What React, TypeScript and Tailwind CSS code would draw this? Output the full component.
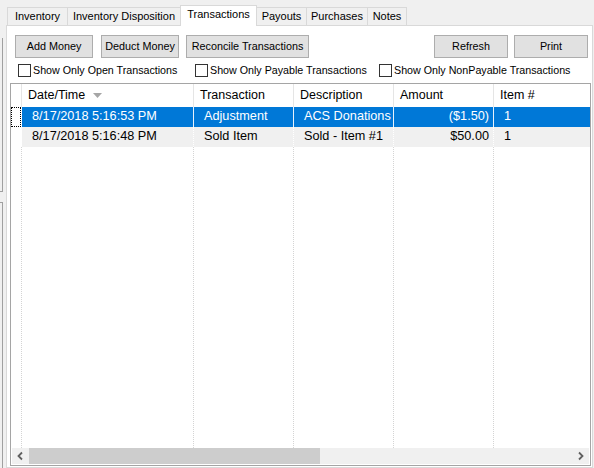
import React from "react";

type Tab = { label: string; width: string; active?: boolean };

const tabs: Tab[] = [
  { label: "Inventory", width: "w-[61px]" },
  { label: "Inventory Disposition", width: "w-[114px]" },
  { label: "Transactions", width: "w-[77px]", active: true },
  { label: "Payouts", width: "w-[51px]" },
  { label: "Purchases", width: "w-[62px]" },
  { label: "Notes", width: "w-[40px]" },
];

type Column = { key: string; label: string; width: string; right?: boolean; sorted?: boolean };

const columns: Column[] = [
  { key: "date", label: "Date/Time", width: "w-[172px] border-r", sorted: true },
  { key: "type", label: "Transaction", width: "w-[100px] border-r" },
  { key: "desc", label: "Description", width: "w-[100px] border-r" },
  { key: "amount", label: "Amount", width: "w-[100px] border-r", right: true },
  { key: "item", label: "Item #", width: "flex-1" },
];

type Row = Record<string, string>;

const rows: Row[] = [
  { date: "8/17/2018 5:16:53 PM", type: "Adjustment", desc: "ACS Donations", amount: "($1.50)", item: "1" },
  { date: "8/17/2018 5:16:48 PM", type: "Sold Item", desc: "Sold - Item #1", amount: "$50.00", item: "1" },
];

const btn =
  "h-[23px] border border-[#adadad] bg-[#e1e1e1] text-[10.8px] text-black flex items-center justify-center";

function CheckOption({ label, width }: { label: string; width: string }) {
  return (
    <div className={`flex items-center ${width}`}>
      <div className="w-[13px] h-[13px] border border-[#333333] bg-white shrink-0" />
      <span className="ml-[2px] text-[10.7px] leading-none text-black whitespace-nowrap">{label}</span>
    </div>
  );
}

function Chevron({ dir }: { dir: "left" | "right" }) {
  return (
    <svg width="17" height="16" viewBox="0 0 17 16">
      <polyline
        points={dir === "left" ? "10,4.5 6.5,8 10,11.5" : "7,4.5 10.5,8 7,11.5"}
        fill="none"
        stroke="#606060"
        strokeWidth="1.8"
      />
    </svg>
  );
}

export default function App() {
  return (
    <div className="w-[594px] h-[468px] bg-[#f0f0f0] flex overflow-hidden font-['Liberation_Sans',Arial,sans-serif]">
      {/* edge of the neighbouring panel */}
      <div className="w-[6px] flex flex-col pt-[38px]">
        <div className="w-[3px] h-[154px] border-r border-b border-[#a0a0a0]" />
        <div className="w-[3px] flex-1 mt-[10px] border-r border-t border-[#a0a0a0]" />
      </div>

      <div className="flex-1 flex flex-col mr-[1px]">
        {/* tab strip */}
        <div className="h-[25px] flex items-end pl-[1px]">
          {tabs.map((t, i) => (
            <div
              key={t.label}
              className={`${t.width} ${i > 0 ? "-ml-px" : ""} ${
                t.active
                  ? "h-[21px] bg-white relative z-10 -mb-px pb-[3px]"
                  : "h-[18px] bg-[#f0f0f0]"
              } border-t border-l border-r border-[#d9d9d9] flex items-center justify-center text-[11px] text-black whitespace-nowrap`}
            >
              {t.label}
            </div>
          ))}
        </div>

        {/* tab page */}
        <div className="flex-1 bg-white border border-[#d9d9d9] flex flex-col">
          <div className="flex mt-[9px] pl-[8px] pr-[4px]">
            <div className={`${btn} w-[78px]`}>Add Money</div>
            <div className={`${btn} w-[78px] ml-[8px]`}>Deduct Money</div>
            <div className={`${btn} w-[123px] ml-[7px]`}>Reconcile Transactions</div>
            <div className={`${btn} w-[74px] ml-auto`}>Refresh</div>
            <div className={`${btn} w-[74px] ml-[6px]`}>Print</div>
          </div>

          <div className="flex h-[13px] mt-[6px] pl-[11px]">
            <CheckOption label="Show Only Open Transactions" width="w-[177px]" />
            <CheckOption label="Show Only Payable Transactions" width="w-[184px]" />
            <CheckOption label="Show Only NonPayable Transactions" width="flex-1" />
          </div>

          {/* grid */}
          <div className="mt-[6px] ml-[3px] mr-[1px] h-[383px] border border-[#a5a5a5] bg-white flex flex-col">
            <div className="h-[23px] flex">
              <div className="w-[11px] border-r border-[#e5e5e5]" />
              {columns.map((c) => (
                <div
                  key={c.key}
                  className={`${c.width} border-[#e5e5e5] flex items-center pl-[6px] text-[12.5px] text-black whitespace-nowrap`}
                >
                  {c.label}
                  {c.sorted && (
                    <svg width="9" height="5" viewBox="0 0 9 5" className="ml-[8px] mb-[1px]">
                      <polygon points="0,0 9,0 4.5,5" fill="#a6a6a6" />
                    </svg>
                  )}
                </div>
              ))}
            </div>

            {rows.map((r, i) => {
              const selected = i === 0;
              return (
                <div key={i} className="h-[20px] flex text-[12.7px]">
                  <div className="w-[11px] bg-white">
                    {selected && <div className="w-[10px] h-full border border-dotted border-black" />}
                  </div>
                  {columns.map((c) => (
                    <div
                      key={c.key}
                      className={`${c.width} ${
                        selected
                          ? "bg-[#0078d7] text-white border-[#e8f1fb]"
                          : "bg-[#f0f0f0] text-black border-dotted border-white"
                      } flex items-center whitespace-nowrap overflow-hidden ${
                        c.right ? "justify-end pr-[4px]" : "pl-[10px]"
                      }`}
                    >
                      {r[c.key]}
                    </div>
                  ))}
                </div>
              );
            })}

            <div className="flex-1 flex">
              <div className="w-[11px] border-r border-dotted border-[#d4d4d4]" />
              {columns.map((c) => (
                <div key={c.key} className={`${c.width} border-dotted border-[#d4d4d4]`} />
              ))}
            </div>

            {/* horizontal scrollbar */}
            <div className="h-[16px] mb-[1px] mx-[1px] flex bg-[#f0f0f0]">
              <div className="w-[17px] flex items-center justify-center">
                <Chevron dir="left" />
              </div>
              <div className="w-[291px] bg-[#cdcdcd]" />
              <div className="flex-1" />
              <div className="w-[17px] flex items-center justify-center">
                <Chevron dir="right" />
              </div>
            </div>
          </div>
        </div>
      </div>
    </div>
  );
}
